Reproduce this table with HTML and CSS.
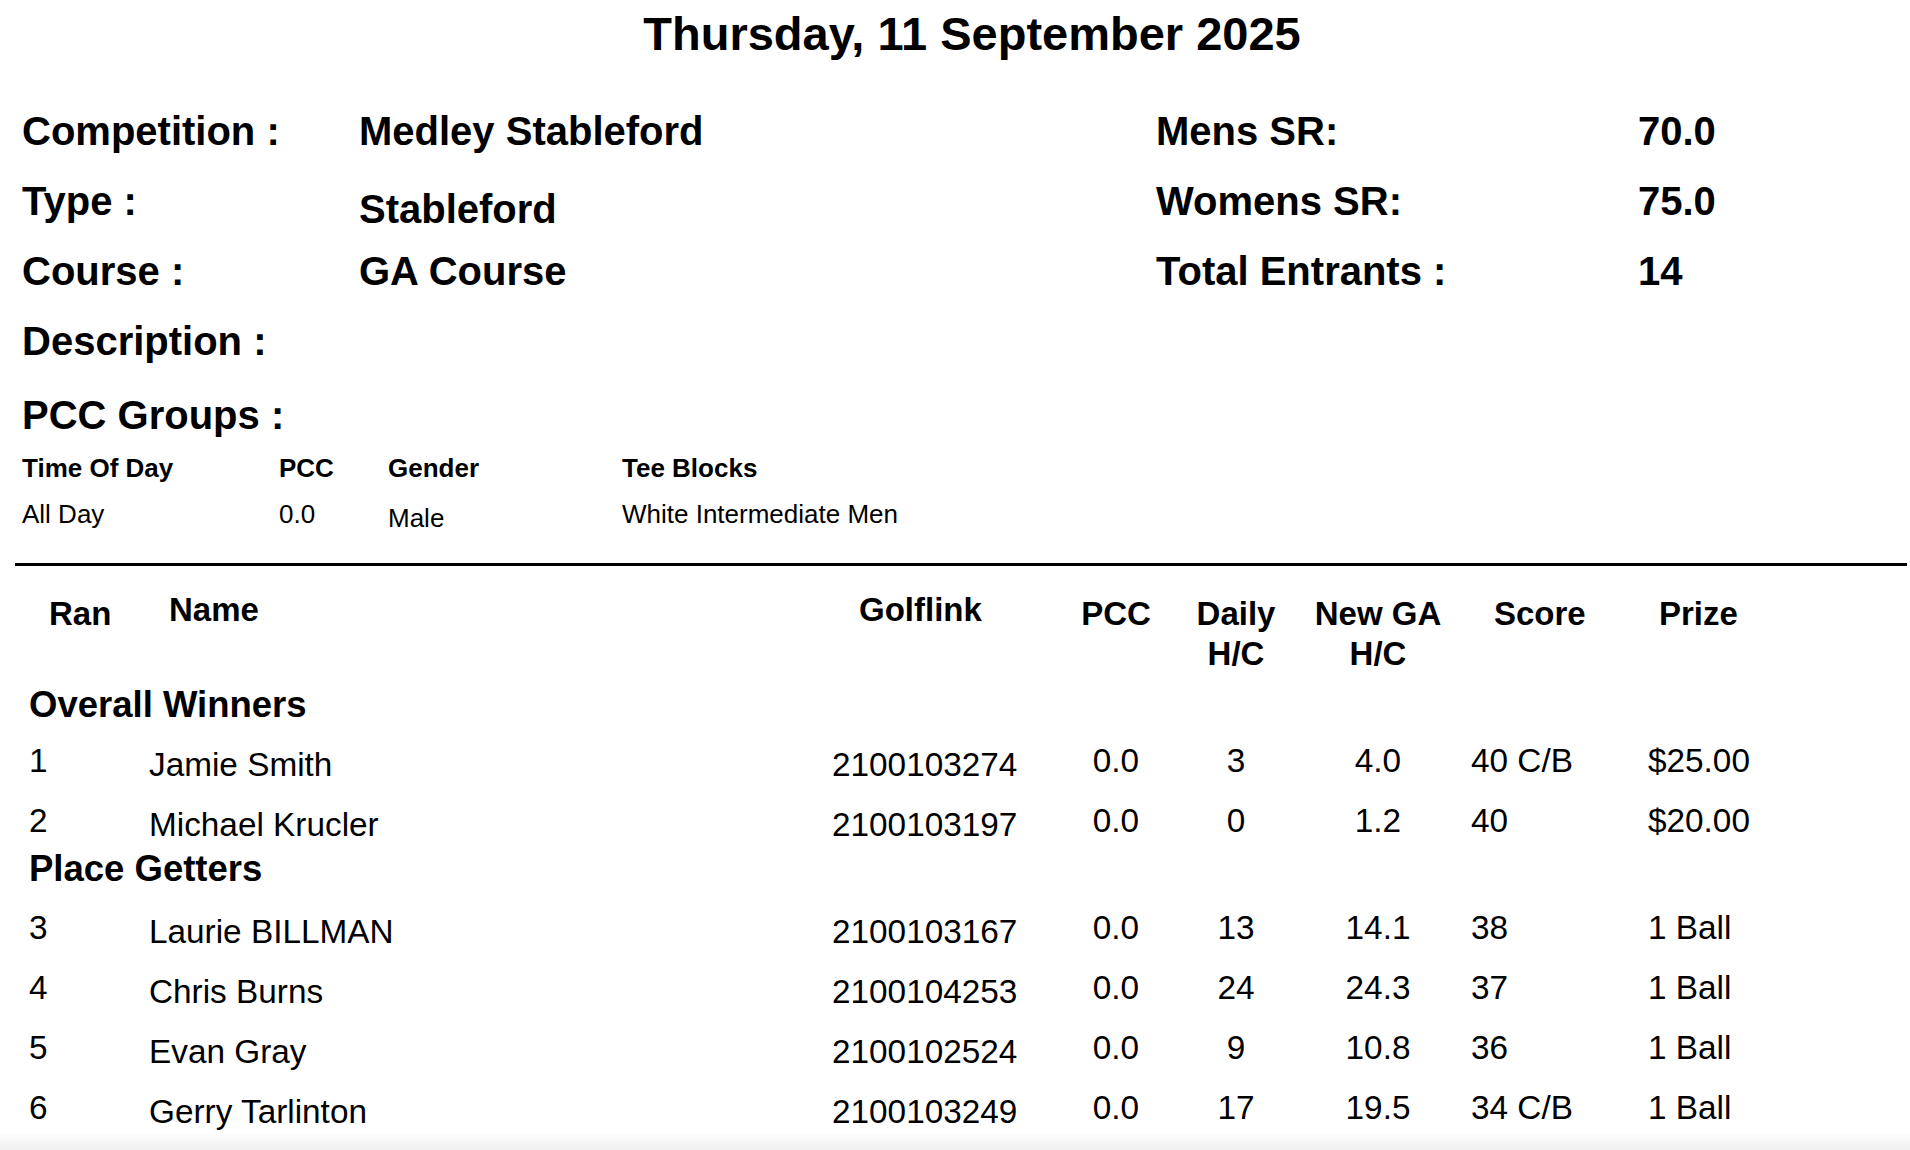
FILE: index.html
```html
<!DOCTYPE html>
<html lang="en">
<head>
<meta charset="utf-8">
<title>Competition Results</title>
<link rel="stylesheet" href="styles.css">
</head>
<body>
<div class="page">
  <h1 class="title">Thursday, 11 September 2025</h1>

  <div class="info">
    <div>Competition :</div><div>Medley Stableford</div><div>Mens SR:</div><div>70.0</div>
    <div>Type :</div><div class="drop">Stableford</div><div>Womens SR:</div><div>75.0</div>
    <div>Course :</div><div>GA Course</div><div>Total Entrants :</div><div>14</div>
    <div class="span">Description :</div>
  </div>

  <div class="pcc-title">PCC Groups :</div>
  <div class="groups">
    <div class="gh">Time Of Day</div><div class="gh">PCC</div><div class="gh">Gender</div><div class="gh">Tee Blocks</div>
    <div class="gd">All Day</div><div class="gd">0.0</div><div class="gd low">Male</div><div class="gd">White Intermediate Men</div>
  </div>

  <div class="rule"></div>

  <div class="results">
    <div class="row thead">
      <div class="h pad">Ran</div>
      <div class="h pad hi">Name</div>
      <div class="h golf hi">Golflink</div>
      <div class="h c">PCC</div>
      <div class="h c">Daily<br>H/C</div>
      <div class="h c">New GA<br>H/C</div>
      <div class="h score">Score</div>
      <div class="h prize">Prize</div>
    </div>

    <div class="section">Overall Winners</div>
    <div class="row data"><div>1</div><div class="low">Jamie Smith</div><div class="low">2100103274</div><div class="c">0.0</div><div class="c">3</div><div class="c">4.0</div><div class="sv">40 C/B</div><div>$25.00</div></div>
    <div class="row data"><div>2</div><div class="low">Michael Krucler</div><div class="low">2100103197</div><div class="c">0.0</div><div class="c">0</div><div class="c">1.2</div><div class="sv">40</div><div>$20.00</div></div>

    <div class="section tight">Place Getters</div>
    <div class="row data"><div>3</div><div class="low">Laurie BILLMAN</div><div class="low">2100103167</div><div class="c">0.0</div><div class="c">13</div><div class="c">14.1</div><div class="sv">38</div><div>1 Ball</div></div>
    <div class="row data"><div>4</div><div class="low">Chris Burns</div><div class="low">2100104253</div><div class="c">0.0</div><div class="c">24</div><div class="c">24.3</div><div class="sv">37</div><div>1 Ball</div></div>
    <div class="row data"><div>5</div><div class="low">Evan Gray</div><div class="low">2100102524</div><div class="c">0.0</div><div class="c">9</div><div class="c">10.8</div><div class="sv">36</div><div>1 Ball</div></div>
    <div class="row data"><div>6</div><div class="low">Gerry Tarlinton</div><div class="low">2100103249</div><div class="c">0.0</div><div class="c">17</div><div class="c">19.5</div><div class="sv">34 C/B</div><div>1 Ball</div></div>
  </div>
</div>
<div class="bottom-fade"></div>
</body>
</html>
```

FILE: styles.css
```css
html, body {
  margin: 0;
  padding: 0;
  background: #fff;
  color: #000;
  font-family: "Liberation Sans", Arial, Helvetica, sans-serif;
}

.page {
  width: 1910px;
  overflow: hidden;
}

.title {
  margin: 0;
  padding: 4px 0 0 34px;
  height: 60px;
  line-height: 60px;
  font-size: 47px;
  font-weight: bold;
  text-align: center;
}

.info {
  margin-top: 32px;
  padding-left: 22px;
  display: grid;
  grid-template-columns: 337px 797px 482px 1fr;
  grid-auto-rows: 70px;
  line-height: 70px;
  font-size: 40px;
  font-weight: bold;
  white-space: nowrap;
}

.info .drop {
  padding-top: 8px;
}

.info .span {
  grid-column: 1 / -1;
}

.pcc-title {
  margin-top: 6px;
  padding-left: 22px;
  height: 66px;
  line-height: 66px;
  font-size: 40px;
  font-weight: bold;
}

.groups {
  padding-left: 22px;
  display: grid;
  grid-template-columns: 257px 109px 234px 1fr;
  grid-template-rows: 40px 52px;
  font-size: 26px;
  white-space: nowrap;
}

.groups .gh {
  font-weight: bold;
  line-height: 40px;
}

.groups .gd {
  line-height: 52px;
}

.groups .low {
  padding-top: 4px;
}

.rule {
  margin: 23px 3px 0 15px;
  height: 3px;
  background: #000;
}

.results {
  margin-top: 24px;
  padding-left: 29px;
}

.row {
  display: grid;
  grid-template-columns: 120px 683px 228px 112px 128px 156px 192px 1fr;
  white-space: nowrap;
}

.thead {
  height: 89px;
  font-size: 33px;
  font-weight: bold;
  line-height: 40px;
}

.thead .h {
  padding-top: 4px;
}

.thead .h.hi {
  padding-top: 0;
}

.thead .pad {
  padding-left: 20px;
}

.thead .golf {
  padding-left: 27px;
}

.thead .score {
  padding-left: 38px;
}

.thead .prize {
  padding-left: 11px;
}

.c {
  text-align: center;
}

.section {
  height: 52px;
  line-height: 52px;
  font-size: 36.5px;
  font-weight: bold;
}

.section.tight {
  height: 36px;
  line-height: 36px;
  padding-bottom: 11px;
}

.data {
  height: 60px;
  line-height: 60px;
  font-size: 33.33px;
}

.data .low {
  padding-top: 4px;
}

.data .sv {
  padding-left: 15px;
}

.bottom-fade {
  position: fixed;
  left: 0;
  right: 0;
  bottom: 0;
  height: 18px;
  background: linear-gradient(to bottom, rgba(242, 242, 242, 0), #efefef);
  pointer-events: none;
}
```
